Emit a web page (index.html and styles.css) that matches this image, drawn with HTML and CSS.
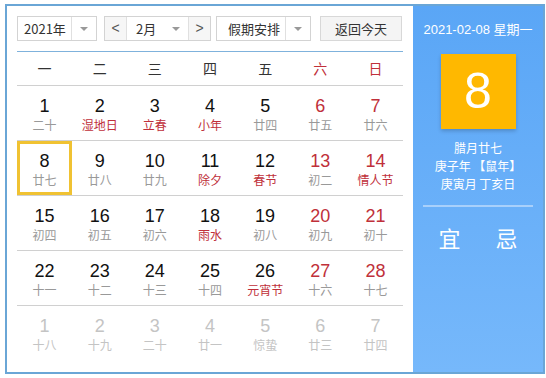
FILE: index.html
```html
<!DOCTYPE html>
<html>
<head>
  <meta charset="UTF-8">
  <title>万年历</title>
  <meta name="viewport" content="width=device-width, initial-scale=1">
  <link rel="stylesheet" href="styles.css">
</head>
<body>

<div class="calendar">
  <!-- Left: month grid -->
  <div class="main">
    <div class="toolbar">
      <div class="select year-select">
        <span class="select-text">2021年</span>
        <span class="select-arrow"><i class="caret"></i></span>
      </div>
      <div class="month-group">
        <span class="nav-btn">&lt;</span>
        <span class="month-text">2月</span>
        <span class="month-arrow"><i class="caret"></i></span>
        <span class="nav-btn">&gt;</span>
      </div>
      <div class="select holiday-select">
        <span class="select-text">假期安排</span>
        <span class="select-arrow"><i class="caret"></i></span>
      </div>
      <button class="today-btn">返回今天</button>
    </div>

    <div class="week-head">
      <span>一</span><span>二</span><span>三</span><span>四</span><span>五</span>
      <span class="red">六</span><span class="red">日</span>
    </div>

    <div class="days" id="days"></div>
  </div>

  <!-- Right: selected day detail -->
  <div class="side">
    <div class="side-date">2021-02-08 星期一</div>
    <div class="big-day">8</div>
    <div class="lunar-info">
      <div>腊月廿七</div>
      <div>庚子年 【鼠年】</div>
      <div>庚寅月 丁亥日</div>
    </div>
    <div class="side-line"></div>
    <div class="yiji">
      <span>宜</span><span>忌</span>
    </div>
  </div>
</div>

<script>
  // [day, lunar text, flags] : r = red number, f = festival (red lunar), o = other month, s = selected
  const days = [
    [1, '二十', ''], [2, '湿地日', 'f'], [3, '立春', 'f'], [4, '小年', 'f'], [5, '廿四', ''], [6, '廿五', 'r'], [7, '廿六', 'r'],
    [8, '廿七', 's'], [9, '廿八', ''], [10, '廿九', ''], [11, '除夕', 'f'], [12, '春节', 'f'], [13, '初二', 'r'], [14, '情人节', 'rf'],
    [15, '初四', ''], [16, '初五', ''], [17, '初六', ''], [18, '雨水', 'f'], [19, '初八', ''], [20, '初九', 'r'], [21, '初十', 'r'],
    [22, '十一', ''], [23, '十二', ''], [24, '十三', ''], [25, '十四', ''], [26, '元宵节', 'f'], [27, '十六', 'r'], [28, '十七', 'r'],
    [1, '十八', 'o'], [2, '十九', 'o'], [3, '二十', 'o'], [4, '廿一', 'o'], [5, '惊蛰', 'o'], [6, '廿三', 'o'], [7, '廿四', 'o']
  ];

  const grid = document.getElementById('days');
  days.forEach(d => {
    const cell = document.createElement('div');
    cell.className = 'day';
    if (d[2].includes('r')) cell.classList.add('weekend');
    if (d[2].includes('f')) cell.classList.add('festival');
    if (d[2].includes('o')) cell.classList.add('other');
    if (d[2].includes('s')) cell.classList.add('selected');
    cell.innerHTML = '<span class="num">' + d[0] + '</span><span class="lunar">' + d[1] + '</span>';
    grid.appendChild(cell);
  });
</script>

</body>
</html>
```

FILE: styles.css
```css
body {
  margin: 0;
  padding: 4px 0 0 5px;
  font-family: "Liberation Sans", "Noto Sans CJK SC", sans-serif;
  background: #fff;
  color: #222;
}
.calendar {
  display: flex;
  width: 536px;
  height: 366px;
  border: 2px solid #6aa6d6;
}
.main {
  width: 386px;
  padding: 10px 10px 0 10px;
}

/* Toolbar */
.toolbar {
  display: flex;
  height: 25px;
  font-family: "Noto Sans CJK SC", sans-serif;
  font-size: 13px;
  color: #333;
}
.select, .month-group {
  display: flex;
  border: 1px solid #d3d3d3;
  box-sizing: border-box;
  height: 25px;
  background: #fff;
}
.select-text {
  line-height: 23px;
  padding-left: 11px;
  flex: 1;
}
.select-arrow {
  width: 24px;
  border-left: 1px solid #e0e0e0;
  display: flex;
  align-items: center;
  justify-content: center;
}
.caret {
  width: 0;
  height: 0;
  border-left: 4px solid transparent;
  border-right: 4px solid transparent;
  border-top: 4px solid #999;
}
.year-select {
  width: 80px;
}
.year-select .select-text {
  padding-left: 6px;
}
.month-group {
  width: 107px;
  margin-left: 7px;
}
.nav-btn {
  width: 21px;
  line-height: 23px;
  text-align: center;
  background: #f6f6f6;
  color: #555;
  font-family: "Liberation Sans", sans-serif;
  font-size: 14px;
}
.nav-btn:first-child {
  border-right: 1px solid #e0e0e0;
}
.nav-btn:last-child {
  border-left: 1px solid #e0e0e0;
}
.month-text {
  flex: 1;
  line-height: 23px;
  padding-left: 9px;
}
.month-arrow {
  width: 24px;
  display: flex;
  align-items: center;
  justify-content: center;
}
.holiday-select {
  width: 95px;
  margin-left: 5px;
}
.holiday-select .select-text {
  padding-left: 11px;
}
.today-btn {
  margin-left: 9px;
  width: 82px;
  height: 25px;
  padding: 0;
  border: 1px solid #d8d8d8;
  background: #f4f4f4;
  font-family: "Noto Sans CJK SC", sans-serif;
  font-size: 13px;
  color: #333;
}

/* Week header */
.week-head {
  display: grid;
  grid-template-columns: repeat(7, 1fr);
  margin-top: 10px;
  border-top: 1px solid #7fb2dc;
  border-bottom: 1px solid #d0d0d0;
  height: 33px;
  line-height: 33px;
  text-align: center;
  font-family: "Noto Sans CJK SC", sans-serif;
  font-size: 14px;
  color: #333;
}
.red {
  color: #c0303a;
}

/* Day grid */
.days {
  display: grid;
  grid-template-columns: repeat(7, 1fr);
}
.day {
  height: 51px;
  padding-top: 3px;
  border-bottom: 1px solid #d0d0d0;
  display: flex;
  flex-direction: column;
  align-items: center;
  justify-content: center;
}
.day:nth-last-child(-n+7) {
  border-bottom: none;
}
.num {
  font-size: 18px;
  line-height: 20px;
  color: #111;
}
.lunar {
  font-family: "Noto Sans CJK SC", sans-serif;
  font-size: 12px;
  line-height: 18px;
  color: #999;
}
.day.weekend .num {
  color: #c0303a;
}
.day.festival .lunar {
  color: #c0303a;
}
.day.other .num,
.day.other .lunar {
  color: #c4c4c4;
}
.day.selected {
  box-shadow: inset 0 0 0 3px #f0c232;
}

/* Right panel */
.side {
  width: 130px;
  background: linear-gradient(180deg, #5aa6f6, #76b8fb);
  color: #fff;
  display: flex;
  flex-direction: column;
  align-items: center;
  font-family: "Noto Sans CJK SC", sans-serif;
}
.side-date {
  margin-top: 16px;
  font-size: 13px;
  line-height: 16px;
  font-family: "Liberation Sans", "Noto Sans CJK SC", sans-serif;
}
.big-day {
  margin-top: 16px;
  width: 75px;
  height: 75px;
  background: #ffb800;
  box-shadow: 0 2px 4px rgba(0,0,0,0.2);
  font-family: "Liberation Sans", sans-serif;
  font-size: 50px;
  line-height: 75px;
  text-align: center;
}
.lunar-info {
  margin-top: 10px;
  font-size: 12px;
  line-height: 18px;
  text-align: center;
}
.side-line {
  width: 110px;
  height: 2px;
  margin-top: 12px;
  background: #a8d0fb;
}
.yiji {
  margin-top: 14px;
  display: flex;
  gap: 35px;
  font-size: 22px;
}
```
